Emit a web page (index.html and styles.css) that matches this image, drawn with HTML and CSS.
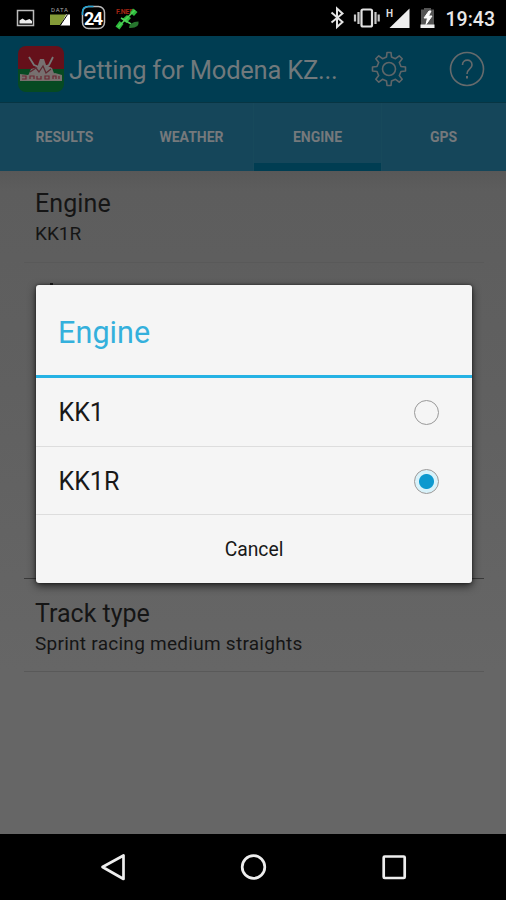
FILE: index.html
```html
<!DOCTYPE html>
<html lang="en">
<head>
<meta charset="utf-8">
<title>Jetting for Modena KZ</title>
<link rel="stylesheet" href="styles.css">
</head>
<body>
<div class="screen">
  <div class="status">
    <svg class="status-left" width="150" height="36" viewBox="0 0 150 36">
      <path d="M17.500 10.500h16v15h-16z" fill="none" stroke="#bbb" stroke-width="1.500"/>
      <path d="M19.500 23.500v-3l3-2 3 2 4-1.500 2.500 2v2.500z" fill="#eee"/>
      <text x="51" y="12" class="tiny" textLength="17">DATA</text>
      <path d="M50 14.500h17.500L60 25H50z" fill="#849b38"/>
      <path d="M60.500 25.500L66 14.500h4v11z" fill="#fff"/>
      <path d="M67.500 14.500L60.500 25" stroke="#000" stroke-width="1"/>
      <rect x="82.500" y="6.500" width="22" height="22" rx="6" fill="none" stroke="#bbb" stroke-width="1.500"/>
      <path d="M82.500 15v-3q0-5.500 6-5.500h5" fill="none" stroke="#21a2d2" stroke-width="1.500"/>
      <text x="84" y="24.500" class="day" textLength="19">24</text>
      <text x="116" y="13.500" class="fix" textLength="18">F.NED</text>
      <g fill="#2dbb3c">
        <path d="M133 8.500l4.500 3.500-3.500 4-4-3.500zM127 15l4 3-4.500 5-4.500-3.500zM119.500 21l4 3-4 5.500-4-3z"/>
        <path d="M118 27l17-17M121 18l10 6" stroke="#4fd058" stroke-width="1.500"/>
        <path d="M129 28q0-6 9.500-6.500 1.500 7-9.500 6.500z" fill="#27752e"/>
      </g>
    </svg>
    <svg class="status-right" width="130" height="36" viewBox="0 0 130 36">
      <path d="M6.500 12.500l11 9.500-5.500 5V8.500l5.500 5-11 9" fill="none" stroke="#e4e4e4" stroke-width="2"/>
      <rect x="36.500" y="9.500" width="10.500" height="17" rx="1.500" fill="none" stroke="#e2e2e2" stroke-width="2.200"/>
      <path d="M33.500 12v12M30 14.500v7M50.500 12v12M53.700 14.500v7" stroke="#c8c8c8" stroke-width="2.200"/>
      <text x="61" y="17" class="net">H</text>
      <path d="M64.500 28L84.500 8.500V28z" fill="#eee"/>
      <path d="M96 9.500h3V8h7v1.500h3V25H96z" fill="#555"/>
      <path d="M95.500 24.500H109.500V28H95.500z" fill="#eee"/>
      <path d="M104 11l-5 7h3.500l-1.500 6.500 6-8.500h-3.500l2.500-5z" fill="#fff" stroke="#fff"/>
    </svg>
    <span class="clock">19:43</span>
  </div>
  <header class="bar">
    <svg class="logo" width="46" height="46" viewBox="0 0 46 46">
      <defs><clipPath id="r"><rect width="46" height="46" rx="8"/></clipPath></defs>
      <g clip-path="url(#r)"><path d="M0 0h46v23H0z" fill="#65101a"/><path d="M0 23h46v23H0z" fill="#064a22"/></g>
      <path d="M11 11l5 8 5 2M35 11l-4 8-5 2" fill="none" stroke="#777" stroke-width="1.800"/>
      <path d="M20 19l2-6h4l2 6 6 3 3 8H10l3-7 7-2z" fill="#777070"/>
      <path d="M12 26l6-4 3 4 4-6 3 7 5-4" fill="none" stroke="#5e2931" stroke-width="1.300"/>
      <path d="M2 28l8 1 5-2 6 2h10l6-2 7 2v6H2z" fill="#77706d"/>
      <path d="M4 30h4v3H4M12 33v-3h4v3M19 30v3h4v-3M27 30h4v3h-4zM35 33v-3h3v3M41 30v3" fill="none" stroke="#6b2834" stroke-width="1.200"/>
    </svg>
    <h1 class="title">Jetting for Modena KZ...</h1>
    <svg class="gear" width="36" height="36" viewBox="-18 -18 36 36" fill="none" stroke="#5f6669" stroke-width="1.600" stroke-linejoin="round">
      <path d="M-2.500-12L-2-16.500H2L2.500-12 6.500-10.300 10.200-13.200 13.200-10.200 10.300-6.500 12-2.500 16.500-2V2L12 2.500 10.300 6.500 13.200 10.200 10.200 13.200 6.500 10.300 2.500 12 2 16.500H-2L-2.500 12-6.500 10.300-10.200 13.200-13.200 10.200-10.300 6.500-12 2.500-16.500 2V-2L-12-2.500-10.300-6.500-13.200-10.200-10.200-13.200-6.500-10.300z"/>
      <circle r="6.500"/>
    </svg>
    <svg class="help" width="36" height="36" viewBox="-18 -18 36 36" fill="none" stroke="#656a6c" stroke-width="1.600">
      <circle r="16.500"/><path d="M-4.500-4C-4.500-10.500 5-10.500 5-4 5 0 0 0 0 5"/><path d="M0 7v2.500" stroke-width="2"/>
    </svg>
  </header>
  <nav class="tabs">
    <span class="tab">RESULTS</span><span class="tab">WEATHER</span><span class="tab active">ENGINE</span><span class="tab">GPS</span>
  </nav>
  <main class="content">
    <section class="pref first"><h2 class="name">Engine</h2><p class="value">KK1R</p></section>
    <section class="pref covered"><i class="speck"></i></section>
    <section class="pref last"><h2 class="name">Track type</h2><p class="value sprint">Sprint racing medium straights</p></section>
    <div class="dialog">
      <h2 class="dialog-title">Engine</h2>
      <div class="option">KK1<i class="radio"></i></div>
      <div class="option">KK1R<i class="radio on"></i></div>
      <div class="cancel">Cancel</div>
    </div>
  </main>
  <footer class="navbar">
    <svg width="506" height="66" viewBox="0 0 506 66" fill="none" stroke="#eee" stroke-width="2.700" stroke-linejoin="round">
      <path d="M102.500 33L123.500 21.500v23.500z"/><circle cx="253.500" cy="33" r="11.300"/><rect x="383.700" y="22.500" width="21" height="21.500" rx="1"/>
    </svg>
  </footer>
</div>
</body>
</html>
```
FILE: styles.css
```css
* { box-sizing: border-box; margin: 0; padding: 0; }
body { font-family: Roboto, "Liberation Sans", sans-serif; background: #000; }
.screen { width: 506px; height: 900px; display: flex; flex-direction: column; overflow: hidden; }
.status { height: 36px; flex: none; background: #000; display: flex; }
.status-left { flex: none; }
.status-right { flex: none; margin-left: 175px; }
.tiny { font-size: 6px; fill: #aaa; }
.day { font-size: 18px; font-weight: 700; fill: #fff; }
.fix { font-size: 7px; font-weight: 700; fill: #a32513; }
.net { font-size: 10px; font-weight: 700; fill: #ddd; }
.clock { color: #e8e8e8; font-size: 19.5px; line-height: 39px; font-weight: 500; margin-left: -9.5px; white-space: nowrap; }
.bar { height: 67px; flex: none; background: #003d52; display: flex; align-items: center; padding: 0 21px 0 18px; border-bottom: 1px solid #073543; }
.logo { flex: none; }
.title { font-weight: 400; font-size: 25.5px; line-height: 34px; letter-spacing: -0.23px; color: #71797c; margin: 2px 0 0 5px; width: 302px; white-space: nowrap; }
.gear, .help { flex: none; }
.help { margin-left: 42px; }
.tabs { height: 68px; flex: none; background: #15465a; display: grid; grid-template-columns: 129px 125px 127px 125px; grid-template-rows: 68px; }
.tab { color: #75797c; font-weight: 700; font-size: 14px; line-height: 20px; padding-top: 24px; text-align: center; }
.tab.active { border-bottom: 8px solid #003d52; box-shadow: -1px 0 #17495b, 1px 0 #17495b; }
.content { height: 663px; flex: none; position: relative; padding: 0 22px 0 24px; background: linear-gradient(#585858 0, #5d5d5d 20px, #606060 220px, #666 500px, #666 100%); }
.pref { padding-left: 11px; border-bottom: 1px solid #595959; color: #151515; }
.first { height: 92px; padding-top: 17px; }
.covered { height: 316px; padding-top: 20px; border-bottom: 1px solid #393939; }
.last { height: 93px; padding-top: 19px; }
.name { font-size: 25px; font-weight: 400; line-height: 32px; }
.value { font-size: 19px; line-height: 28px; }
.first .name, .dialog-title { letter-spacing: 0.1px; }
.sprint { letter-spacing: 0.27px; }
.speck { display: block; width: 3px; height: 2px; margin-left: 15px; background: #191919; }
.dialog { position: absolute; left: 36px; top: 114px; width: 436px; height: 298px; background: #f5f5f5; border-radius: 3px; box-shadow: 0 3px 8px rgba(0,0,0,.65), 0 0 3px rgba(0,0,0,.55); color: #181818; }
.dialog-title { height: 93px; border-bottom: 3px solid #25b2e4; padding-left: 22px; color: #34b0dc; font-size: 30.5px; line-height: 95px; font-weight: 400; }
.option { height: 68.5px; padding: 2px 33px 0 22.5px; display: flex; align-items: center; justify-content: space-between; border-bottom: 1px solid #ddd; font-size: 25px; }
.radio { width: 25px; height: 25px; border: 1.5px solid #999; border-radius: 50%; }
.radio.on { background: radial-gradient(circle, #0c99cf 0 7px, #d8f2fa 8px 11px, #f5f5f5 12px); }
.cancel { height: 68px; line-height: 69px; text-align: center; font-size: 19.3px; }
.navbar { height: 66px; flex: none; background: #000; }
```
